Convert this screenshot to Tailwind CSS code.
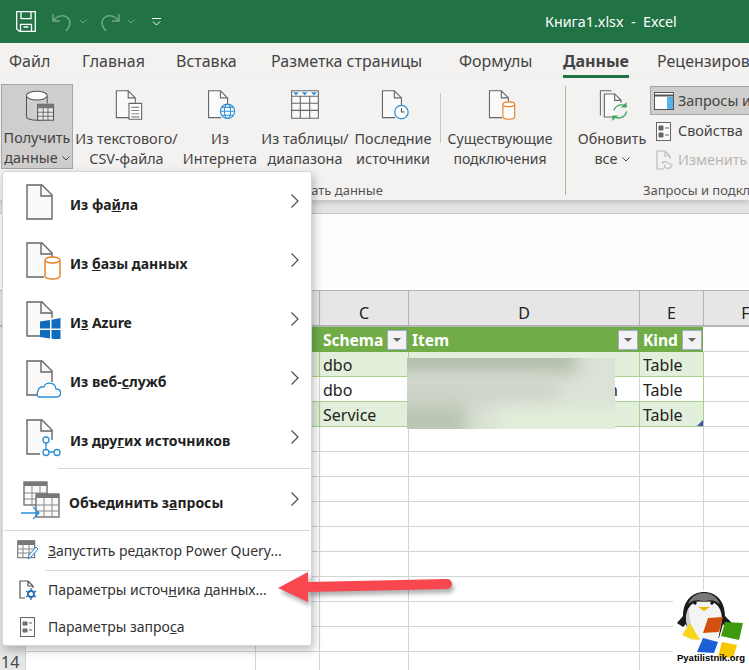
<!DOCTYPE html>
<html lang="en">
<head>
<meta charset="UTF-8">
<title>Книга1.xlsx - Excel</title>
<script src="https://cdn.jsdelivr.net/npm/@tailwindcss/browser@4"></script>
</head>
<body class="bg-white">
<div class="relative w-[749px] h-[670px] overflow-hidden bg-white font-['Noto_Sans',sans-serif] text-[14px] leading-5 text-[#444]">

  <!-- title bar -->
  <div class="flex h-[43px] items-center bg-[#217346] pl-4 text-white">
    <svg class="w-[20px] h-[21px]" viewBox="0 0 20 21" fill="none" stroke="#fff" stroke-width="1.3"><path d="M.7.7h18.6v19.6H3.5L.7 18z"/><path d="M5 .7v7h10v-7M4.500 20.300v-7h11v7M7.500 16h5"/></svg>
    <svg class="ml-[16px] w-[20px] h-[20px]" viewBox="0 0 20 20" fill="none" stroke="#6fa788" stroke-width="1.5"><path d="M1 2v7h7M1.500 8.500C6 3 12 2.500 16 6c3.500 3.500 2 9-2 13"/></svg>
    <svg class="ml-[7px] w-[8px] h-[5px]" viewBox="0 0 8 5" fill="none" stroke="#6fa788"><path d="M.5.500 4 4 7.500.5"/></svg>
    <svg class="ml-[13px] w-[20px] h-[20px]" viewBox="0 0 20 20" fill="none" stroke="#6fa788" stroke-width="1.500"><path d="M19 2v7h-7M18.500 8.500C14 3 8 2.500 4 6c-3.500 3.500-2 9 2 13"/></svg>
    <svg class="ml-[7px] w-[8px] h-[5px]" viewBox="0 0 8 5" fill="none" stroke="#6fa788"><path d="M.5.500 4 4 7.500.5"/></svg>
    <svg class="ml-[17px] w-[9px] h-[8px]" viewBox="0 0 9 8" fill="none" stroke="#fff"><path d="M0 .5h9M1 3.500 4.500 7 8 3.500"/></svg>
    <span class="ml-[384px] whitespace-pre text-[14.3px]">Книга1.xlsx  -  Excel</span>
  </div>

  <!-- tabs -->
  <div class="flex h-[36px] items-center bg-[#f3f2f1] pl-[9px] text-[16px]">
    <span class="w-[73px] shrink-0">Файл</span>
    <span class="w-[94px] shrink-0">Главная</span>
    <span class="w-[95px] shrink-0">Вставка</span>
    <span class="w-[188px] shrink-0">Разметка страницы</span>
    <span class="w-[104px] shrink-0">Формулы</span>
    <span class="relative w-[94px] shrink-0 font-bold">Данные<span class="absolute left-0 top-[24px] h-[3px] w-[66px] bg-[#217346]"></span></span>
    <span class="whitespace-nowrap">Рецензирование</span>
  </div>

  <!-- ribbon -->
  <div class="relative z-10 flex h-[121px] items-start bg-[#f3f2f1] pt-[5px] text-[14.4px] shadow-[0_3px_5px_rgba(0,0,0,0.15)]">
    <div class="ml-px flex h-[85px] w-[72px] flex-col items-center border border-[#a6a6a6] bg-[#cfcecd] pt-[5px] text-center">
      <svg class="ml-[6px] h-[39px] w-[36px]" viewBox="0 0 36 39" fill="none"><path d="M1 8v26c0 2 6 4 13 4h6" stroke="#555" stroke-width="1.300"/><path d="M27 8v9" stroke="#555" stroke-width="1.300"/><ellipse cx="14" cy="7" rx="13" ry="5.500" fill="#fff" stroke="#555" stroke-width="1.300"/><rect x="15" y="18" width="20" height="20" fill="#e8e8e8" stroke="#555" stroke-width="1.300"/><path d="M15 18h20v5H15z" fill="#777"/><path d="M15 28h20M15 33h20M22 23v15M28 23v15" stroke="#555"/></svg>
      <span class="mt-[7px]">Получить</span>
      <span class="flex items-center">данные<svg class="ml-[4px] h-[5px] w-[8px]" viewBox="0 0 8 5" fill="none" stroke="#444"><path d="M.5.500 4 4 7.500.5"/></svg></span>
    </div>

    <div class="flex h-[85px] w-[107px] flex-col items-center pt-[6px] text-center">
      <svg class="ml-[4px] h-[38px] w-[34px]" viewBox="0 0 34 38" fill="none" stroke="#666" stroke-width="1.400"><path d="M17 35H1V1h15l9 9v6" fill="#fafafa"/><path d="M16 1v9h9"/><path d="M17 17h16v20H17z" fill="#fff"/><path d="M20 22h10M20 26h10M20 30h10M20 34h10" stroke="#888"/></svg>
      <span class="mt-[9px] whitespace-nowrap">Из текстового/</span>
      <span>CSV-файла</span>
    </div>

    <div class="flex h-[85px] w-[80px] flex-col items-center pt-[6px] text-center">
      <svg class="ml-[3px] h-[38px] w-[36px]" viewBox="0 0 36 38" fill="none"><path d="M17 35H1V1h15l9 9v9" fill="#fafafa" stroke="#666" stroke-width="1.400"/><path d="M16 1v9h9" stroke="#666" stroke-width="1.400"/><circle cx="25" cy="27" r="9" fill="#fff" stroke="#2b8fd6" stroke-width="1.500"/><ellipse cx="25" cy="27" rx="4" ry="9" stroke="#2b8fd6" stroke-width="1.300"/><path d="M16 27h18M17.500 22h15M17.500 32h15" stroke="#2b8fd6" stroke-width="1.300"/></svg>
      <span class="mt-[9px]">Из</span>
      <span>Интернета</span>
    </div>

    <div class="flex h-[85px] w-[90px] flex-col items-center pt-[6px] text-center">
      <svg class="h-[37px] w-[36px]" viewBox="0 0 36 37" fill="none" stroke="#666" stroke-width="1.400"><path d="M1 1h34v35H1z" fill="#fafafa"/><path d="M1 8h34M1 17h34M1 26h34M12 8v28M24 8v28"/><path d="M3 3h7l-3.500 4zM14 3h7l-3.500 4zM26 3h7l-3.500 4z" fill="#2b8fd6" stroke="none"/></svg>
      <span class="mt-[10px] whitespace-nowrap">Из таблицы/</span>
      <span>диапазона</span>
    </div>

    <div class="flex h-[85px] w-[86px] flex-col items-center pt-[6px] text-center">
      <svg class="ml-[5px] h-[38px] w-[35px]" viewBox="0 0 35 38" fill="none"><path d="M17 35H1V1h15l9 9v9" fill="#fafafa" stroke="#666" stroke-width="1.400"/><path d="M16 1v9h9" stroke="#666" stroke-width="1.400"/><circle cx="25" cy="28" r="8.500" fill="#fff" stroke="#2b8fd6" stroke-width="1.600"/><path d="M25 23v5h4" stroke="#444" stroke-width="1.300"/></svg>
      <span class="mt-[9px] whitespace-nowrap">Последние</span>
      <span>источники</span>
    </div>

    <div class="ml-[4px] mt-[9px] h-[50px] w-px bg-[#c8c6c4]"></div>

    <div class="ml-[1px] flex h-[85px] w-[116px] flex-col items-center pt-[6px] text-center text-[14px]">
      <svg class="ml-[5px] h-[38px] w-[35px]" viewBox="0 0 35 38" fill="none"><path d="M17 35H1V1h15l9 9v5" fill="#fafafa" stroke="#666" stroke-width="1.400"/><path d="M16 1v9h9" stroke="#666" stroke-width="1.400"/><path d="M18 19v15c0 1.500 3 3 7.500 3s7.500-1.500 7.500-3V19" fill="#fff" stroke="#e87d1e" stroke-width="1.400"/><ellipse cx="25.500" cy="18" rx="7.500" ry="3" fill="#fff" stroke="#e87d1e" stroke-width="1.400"/></svg>
      <span class="mt-[9px] whitespace-nowrap">Существующие</span>
      <span>подключения</span>
    </div>

    <div class="ml-[7px] mt-[2px] h-[109px] w-px bg-[#b3b0ad]"></div>

    <div class="ml-[8px] flex h-[85px] w-[76px] flex-col items-center pt-[6px] text-center">
      <svg class="ml-[3px] h-[39px] w-[35px]" viewBox="0 0 35 39" fill="none"><path d="M1 32V1h14" stroke="#666" stroke-width="1.300"/><path d="M19 34H6V5h13l8 8v3" fill="#fafafa" stroke="#666" stroke-width="1.400"/><path d="M19 5v8h8" stroke="#666" stroke-width="1.400"/><path d="M18 26a10 10 0 0 1 16-5M34 27a10 10 0 0 1-16 6" stroke="#3aa760" stroke-width="1.600"/><path d="M34 15v7h-7M16 39v-7h7" fill="#3aa760"/></svg>
      <span class="mt-[8px]">Обновить</span>
      <span class="flex items-center">все<svg class="ml-[4px] h-[5px] w-[8px]" viewBox="0 0 8 5" fill="none" stroke="#444"><path d="M.5.500 4 4 7.500.5"/></svg></span>
    </div>

    <div class="flex w-[99px] flex-col overflow-hidden">
      <div class="mt-[2px] flex h-[29px] w-[120px] items-center whitespace-nowrap border border-[#a6a6a6] bg-[#cfcecd] pl-[3px]">
        <svg class="mr-[4px] h-[18px] w-[20px] shrink-0" viewBox="0 0 20 18" fill="none" stroke="#555"><rect x=".5" y=".5" width="19" height="17" fill="#fff"/><path d="M.5 3.500h19" stroke-width="2"/><path d="M13 5h6v12h-6z" fill="#5ab0e8" stroke="none"/></svg>
        Запросы и подключения
      </div>
      <div class="mt-[2px] flex h-[28px] items-center whitespace-nowrap pl-[6px]">
        <svg class="mr-[7px] h-[19px] w-[15px] shrink-0" viewBox="0 0 15 19" fill="none" stroke="#666"><rect x=".5" y=".5" width="14" height="18" fill="#fafafa"/><path d="M3 4h4v4H3zM3 11h4v4H3z" fill="#666"/><path d="M9 6h4M9 13h4"/></svg>
        Свойства
      </div>
      <div class="flex h-[30px] items-center whitespace-nowrap pl-[6px] text-[#b8b6b4]">
        <svg class="mr-[5px] h-[20px] w-[17px] shrink-0" viewBox="0 0 17 20" fill="none" stroke="#bbb" stroke-width="1.200"><path d="M8 19H1V1h8l5 5v3M9 1v5h5"/><path d="M6 14c0-3 5-3 6-1s4 0 4 2-3 4-6 3-2-3 0-3"/></svg>
        Изменить связи
      </div>
    </div>

    <span class="absolute left-[161px] top-[101px] whitespace-nowrap text-[13px] text-[#555]">Получить и преобразовать данные</span>
    <span class="absolute left-[643px] top-[101px] w-[106px] overflow-hidden whitespace-nowrap text-[13px] text-[#555]">Запросы и подключения</span>
  </div>

  <!-- formula bar -->
  <div class="h-[14px] border-b border-[#c4c4c4] bg-[#e4e4e4]"></div>
  <div class="h-[76px] bg-[#fdfdfd]"></div>

  <!-- worksheet -->
  <div class="grid grid-cols-[25px_230px_64px_89px_231px_64px_84px] grid-rows-[37px_repeat(14,25px)] text-[16px] text-[#222]">
    <div class="col-span-2 border-t border-b-2 border-[#b5b5b5] bg-[#e6e6e6]"></div>
    <div class="border-t border-b-2 border-l border-[#b5b5b5] bg-[#e6e6e6]"></div>
    <div class="flex items-end justify-center border-t border-b-2 border-l border-[#b5b5b5] bg-[#e6e6e6] leading-[23px]">C</div>
    <div class="flex items-end justify-center border-t border-b-2 border-l border-[#b5b5b5] bg-[#e6e6e6] leading-[23px]">D</div>
    <div class="flex items-end justify-center border-t border-b-2 border-l border-[#b5b5b5] bg-[#e6e6e6] leading-[23px]">E</div>
    <div class="flex items-end justify-center border-t border-b-2 border-l border-[#b5b5b5] bg-[#e6e6e6] leading-[23px]">F</div>

    <!-- table header -->
    <div class="bg-[#e6e6e6]"></div><div class="border-b border-[#d4d4d4]"></div><div class="bg-[#70ad47]"></div>
    <div class="flex items-center justify-between bg-[#70ad47] pl-[4px] pr-[1px] text-[15.5px] font-bold text-white">Schema<span class="flex h-[20px] w-[20px] items-center justify-center border border-[#a5a8c8] bg-[#f2f2f2]"><span class="border-x-[4px] border-t-[4px] border-x-transparent border-t-[#666]"></span></span></div>
    <div class="flex items-center justify-between bg-[#70ad47] pl-[4px] pr-[1px] text-[15.5px] font-bold text-white">Item<span class="flex h-[20px] w-[20px] items-center justify-center border border-[#a5a8c8] bg-[#f2f2f2]"><span class="border-x-[4px] border-t-[4px] border-x-transparent border-t-[#666]"></span></span></div>
    <div class="flex items-center justify-between bg-[#70ad47] pl-[4px] pr-[1px] text-[15.5px] font-bold text-white">Kind<span class="flex h-[20px] w-[20px] items-center justify-center border border-[#a5a8c8] bg-[#f2f2f2]"><span class="border-x-[4px] border-t-[4px] border-x-transparent border-t-[#666]"></span></span></div>
    <div class="border-b border-[#d4d4d4]"></div>

    <!-- table rows -->
    <div class="bg-[#e6e6e6]"></div><div class="border-b border-[#d4d4d4]"></div><div class="border-b border-[#a9d08e] bg-[#e2efda]"></div>
    <div class="border-b border-l border-[#a9d08e] bg-[#e2efda] pl-[3px] leading-[26px]">dbo</div>
    <div class="border-b border-l border-[#a9d08e] bg-[#e2efda]"></div>
    <div class="border-b border-l border-[#a9d08e] bg-[#e2efda] pl-[3px] leading-[26px]">Table</div>
    <div class="border-b border-l border-[#d4d4d4] border-l-[#a9d08e]"></div>

    <div class="bg-[#e6e6e6]"></div><div class="border-b border-[#d4d4d4]"></div><div class="border-b border-[#a9d08e]"></div>
    <div class="border-b border-l border-[#a9d08e] border-l-[#d4d4d4] pl-[3px] leading-[26px]">dbo</div>
    <div class="border-b border-l border-[#a9d08e] border-l-[#d4d4d4] pl-[199px] leading-[26px]">n</div>
    <div class="border-b border-l border-[#a9d08e] border-l-[#d4d4d4] pl-[3px] leading-[26px]">Table</div>
    <div class="border-b border-l border-[#d4d4d4] border-l-[#a9d08e]"></div>

    <div class="bg-[#e6e6e6]"></div><div class="border-b border-[#d4d4d4]"></div><div class="border-b border-[#a9d08e] bg-[#e2efda]"></div>
    <div class="border-b border-l border-[#a9d08e] bg-[#e2efda] pl-[3px] leading-[26px]">Service</div>
    <div class="border-b border-l border-[#a9d08e] bg-[#e2efda]"></div>
    <div class="relative border-b border-l border-[#a9d08e] bg-[#e2efda] pl-[3px] leading-[26px]">Table<span class="absolute bottom-0 right-0 h-[6px] w-[6px] bg-[#3f51b5] [clip-path:polygon(100%_0,100%_100%,0_100%)]"></span></div>
    <div class="border-b border-l border-[#d4d4d4] border-l-[#a9d08e]"></div>

    <!-- empty rows -->
    <div class="bg-[#e6e6e6]"></div><div class="border-b border-l border-[#d4d4d4]"></div><div class="border-b border-l border-[#d4d4d4]"></div><div class="border-b border-l border-[#d4d4d4]"></div><div class="border-b border-l border-[#d4d4d4]"></div><div class="border-b border-l border-[#d4d4d4]"></div><div class="border-b border-l border-[#d4d4d4]"></div>
    <div class="bg-[#e6e6e6]"></div><div class="border-b border-l border-[#d4d4d4]"></div><div class="border-b border-l border-[#d4d4d4]"></div><div class="border-b border-l border-[#d4d4d4]"></div><div class="border-b border-l border-[#d4d4d4]"></div><div class="border-b border-l border-[#d4d4d4]"></div><div class="border-b border-l border-[#d4d4d4]"></div>
    <div class="bg-[#e6e6e6]"></div><div class="border-b border-l border-[#d4d4d4]"></div><div class="border-b border-l border-[#d4d4d4]"></div><div class="border-b border-l border-[#d4d4d4]"></div><div class="border-b border-l border-[#d4d4d4]"></div><div class="border-b border-l border-[#d4d4d4]"></div><div class="border-b border-l border-[#d4d4d4]"></div>
    <div class="bg-[#e6e6e6]"></div><div class="border-b border-l border-[#d4d4d4]"></div><div class="border-b border-l border-[#d4d4d4]"></div><div class="border-b border-l border-[#d4d4d4]"></div><div class="border-b border-l border-[#d4d4d4]"></div><div class="border-b border-l border-[#d4d4d4]"></div><div class="border-b border-l border-[#d4d4d4]"></div>
    <div class="bg-[#e6e6e6]"></div><div class="border-b border-l border-[#d4d4d4]"></div><div class="border-b border-l border-[#d4d4d4]"></div><div class="border-b border-l border-[#d4d4d4]"></div><div class="border-b border-l border-[#d4d4d4]"></div><div class="border-b border-l border-[#d4d4d4]"></div><div class="border-b border-l border-[#d4d4d4]"></div>
    <div class="bg-[#e6e6e6]"></div><div class="border-b border-l border-[#d4d4d4]"></div><div class="border-b border-l border-[#d4d4d4]"></div><div class="border-b border-l border-[#d4d4d4]"></div><div class="border-b border-l border-[#d4d4d4]"></div><div class="border-b border-l border-[#d4d4d4]"></div><div class="border-b border-l border-[#d4d4d4]"></div>
    <div class="bg-[#e6e6e6]"></div><div class="border-b border-l border-[#d4d4d4]"></div><div class="border-b border-l border-[#d4d4d4]"></div><div class="border-b border-l border-[#d4d4d4]"></div><div class="border-b border-l border-[#d4d4d4]"></div><div class="border-b border-l border-[#d4d4d4]"></div><div class="border-b border-l border-[#d4d4d4]"></div>
    <div class="bg-[#e6e6e6]"></div><div class="border-b border-l border-[#d4d4d4]"></div><div class="border-b border-l border-[#d4d4d4]"></div><div class="border-b border-l border-[#d4d4d4]"></div><div class="border-b border-l border-[#d4d4d4]"></div><div class="border-b border-l border-[#d4d4d4]"></div><div class="border-b border-l border-[#d4d4d4]"></div>
    <div class="bg-[#e6e6e6]"></div><div class="border-b border-l border-[#d4d4d4]"></div><div class="border-b border-l border-[#d4d4d4]"></div><div class="border-b border-l border-[#d4d4d4]"></div><div class="border-b border-l border-[#d4d4d4]"></div><div class="border-b border-l border-[#d4d4d4]"></div><div class="border-b border-l border-[#d4d4d4]"></div>
    <div class="bg-[#e6e6e6] pl-[1px] text-[#444]">14</div><div class="border-b border-l border-[#d4d4d4]"></div><div class="border-b border-l border-[#d4d4d4]"></div><div class="border-b border-l border-[#d4d4d4]"></div><div class="border-b border-l border-[#d4d4d4]"></div><div class="border-b border-l border-[#d4d4d4]"></div><div class="border-b border-l border-[#d4d4d4]"></div>
  </div>

  <!-- blurred cells -->
  <div class="absolute left-[407px] top-[358px] h-[71px] w-[208px] overflow-hidden bg-[#dbe3d6]">
    <div class="absolute left-[-20px] top-[-8px] h-[22px] w-[190px] bg-[#adb8a6] blur-[9px]"></div>
    <div class="absolute left-[-20px] top-[22px] h-[24px] w-[170px] bg-[#cdd2c9] blur-[9px]"></div>
    <div class="absolute left-[-20px] top-[46px] h-[35px] w-[80px] bg-[#b8c4b1] blur-[9px]"></div>
    <div class="absolute left-[90px] top-[50px] h-[30px] w-[130px] bg-[#e2efda] blur-[9px]"></div>
  </div>

  <!-- data menu -->
  <div class="absolute left-[2px] top-[171px] z-20 flex h-[475px] w-[310px] flex-col rounded-[3px] border border-[#d6d6d6] bg-white text-[#222] shadow-[2px_4px_10px_rgba(0,0,0,0.25)]">
    <div class="flex h-[59px] items-center pl-[23px] pr-[12px]">
      <svg class="h-[36px] w-[28px]" viewBox="0 0 28 36" fill="none" stroke="#666" stroke-width="1.400"><path d="M1 35V1h15l10 10v24z" fill="#fafafa"/><path d="M15 1v11h11"/></svg>
      <span class="ml-[16px] pt-[6px] font-bold">Из фа<u>й</u>ла</span>
      <svg class="mb-[2px] ml-auto h-[14px] w-[8px]" viewBox="0 0 8 14" fill="none" stroke="#444" stroke-width="1.100"><path d="M.5.500 7 7 .5 13.500"/></svg>
    </div>
    <div class="flex h-[59px] items-center pl-[23px] pr-[12px]">
      <svg class="h-[38px] w-[35px]" viewBox="0 0 35 38" fill="none"><path d="M18 35H1V1h15l10 10v5" fill="#fafafa" stroke="#666" stroke-width="1.400"/><path d="M15 1v11h11" stroke="#666" stroke-width="1.400"/><path d="M19 19v15c0 1.500 3 3 7.500 3s7.500-1.500 7.500-3V19" fill="#fff" stroke="#e87d1e" stroke-width="1.400"/><ellipse cx="26.500" cy="18" rx="7.500" ry="3" fill="#fff" stroke="#e87d1e" stroke-width="1.400"/></svg>
      <span class="ml-[9px] pt-[6px] font-bold">Из <u>б</u>азы данных</span>
      <svg class="mb-[2px] ml-auto h-[14px] w-[8px]" viewBox="0 0 8 14" fill="none" stroke="#444" stroke-width="1.100"><path d="M.5.500 7 7 .5 13.500"/></svg>
    </div>
    <div class="flex h-[59px] items-center pl-[23px] pr-[12px]">
      <svg class="h-[38px] w-[35px]" viewBox="0 0 35 38" fill="none"><path d="M14 35H1V1h15l10 10v6" fill="#fafafa" stroke="#666" stroke-width="1.400"/><path d="M15 1v11h11" stroke="#666" stroke-width="1.400"/><path d="M14 20.500 24 19v8.500H14zM25.500 18.800 34.500 17v10.500h-9zM14 29h10v8.500l-10-1.500zM25.500 29h9v10.500l-9-2z" fill="#0f6cbd"/></svg>
      <span class="ml-[9px] pt-[6px] font-bold">И<u>з</u> Azure</span>
      <svg class="mb-[2px] ml-auto h-[14px] w-[8px]" viewBox="0 0 8 14" fill="none" stroke="#444" stroke-width="1.100"><path d="M.5.500 7 7 .5 13.500"/></svg>
    </div>
    <div class="flex h-[59px] items-center pl-[23px] pr-[12px]">
      <svg class="h-[38px] w-[35px]" viewBox="0 0 35 38" fill="none"><path d="M12 35H1V1h15l10 10v11" fill="#fafafa" stroke="#666" stroke-width="1.400"/><path d="M15 1v11h11" stroke="#666" stroke-width="1.400"/><path d="M13 37h17c6 0 6-8 0-8-1-8-11-7-12-2-6-2-9 10-5 10z" fill="#fff" stroke="#2b8fd6" stroke-width="1.300"/></svg>
      <span class="ml-[9px] pt-[6px] font-bold">Из веб-<u>с</u>лужб</span>
      <svg class="mb-[2px] ml-auto h-[14px] w-[8px]" viewBox="0 0 8 14" fill="none" stroke="#444" stroke-width="1.100"><path d="M.5.500 7 7 .5 13.500"/></svg>
    </div>
    <div class="flex h-[60px] items-center pl-[23px] pr-[12px]">
      <svg class="h-[38px] w-[35px]" viewBox="0 0 35 38" fill="none"><path d="M14 35H1V1h15l10 10v10" fill="#fafafa" stroke="#666" stroke-width="1.400"/><path d="M15 1v11h11" stroke="#666" stroke-width="1.400"/><path d="M20 24v7M22 33h6" stroke="#2b8fd6" stroke-width="1.300"/><circle cx="20" cy="21" r="3" fill="#fff" stroke="#2b8fd6" stroke-width="1.300"/><circle cx="20" cy="33.500" r="3" fill="#fff" stroke="#2b8fd6" stroke-width="1.300"/><circle cx="31" cy="33.500" r="3" fill="#fff" stroke="#2b8fd6" stroke-width="1.300"/></svg>
      <span class="ml-[9px] pt-[6px] font-bold">Из дру<u>г</u>их источников</span>
      <svg class="mb-[2px] ml-auto h-[14px] w-[8px]" viewBox="0 0 8 14" fill="none" stroke="#444" stroke-width="1.100"><path d="M.5.500 7 7 .5 13.500"/></svg>
    </div>
    <div class="ml-[55px] mr-px h-px bg-[#d8d8d8]"></div>
    <div class="flex h-[61px] items-center pl-[17px] pr-[12px]">
      <svg class="h-[38px] w-[41px]" viewBox="0 0 41 38" fill="none"><rect x="4" y="1" width="23" height="23" fill="#fafafa" stroke="#666" stroke-width="1.300"/><path d="M4 1h23v4H4z" fill="#777"/><path d="M4 12h23M4 18h23M12 5v19M20 5v19" stroke="#888"/><rect x="16" y="13" width="23" height="23" fill="#fafafa" stroke="#666" stroke-width="1.300"/><path d="M16 13h23v4H16z" fill="#777"/><path d="M16 24h23M16 30h23M24 17v19M32 17v19" stroke="#888"/><path d="M1 32h18M13 26l6 6-6 6" stroke="#2b8fd6" stroke-width="1.300"/></svg>
      <span class="ml-[8px] pt-[6px] font-bold">Объединить з<u>а</u>просы</span>
      <svg class="mb-[2px] ml-auto h-[14px] w-[8px]" viewBox="0 0 8 14" fill="none" stroke="#444" stroke-width="1.100"><path d="M.5.500 7 7 .5 13.500"/></svg>
    </div>
    <div class="mx-px h-px bg-[#d8d8d8]"></div>
    <div class="flex h-[39px] items-center pl-[14px] text-[#333]">
      <svg class="h-[21px] w-[21px]" viewBox="0 0 21 21" fill="none"><rect x=".7" y=".7" width="17" height="17" fill="#fafafa" stroke="#666"/><path d="M1 1h17v4H1z" fill="#777"/><path d="M1 9h17M1 13h17M6 5v13M12 5v13" stroke="#888"/><path d="M11 19l1-4 7-8 2 2-7 8z" fill="#fff" stroke="#2b7cd3"/></svg>
      <span class="ml-[10px] whitespace-nowrap"><u>З</u>апустить редактор Power Query...</span>
    </div>
    <div class="ml-[42px] mr-px h-px bg-[#d8d8d8]"></div>
    <div class="flex h-[37px] items-center pl-[16px] text-[#333]">
      <svg class="h-[20px] w-[19px]" viewBox="0 0 19 20" fill="none"><path d="M6 18H1V1h8l5 5v2M9 1v5h5" stroke="#555" stroke-width="1.200"/><circle cx="12" cy="14" r="3" stroke="#2b6cb0" stroke-width="1.800"/><path d="M12 8v3M12 17v3M7 11l2 1.500M15 15.500l2 1.500M7 17l2-1.500M15 12.500l2-1.500" stroke="#2b6cb0" stroke-width="1.300"/></svg>
      <span class="ml-[10px] whitespace-nowrap">Параметры источ<u>н</u>ика данных...</span>
    </div>
    <div class="flex h-[37px] items-center pl-[17px] text-[#333]">
      <svg class="h-[20px] w-[15px]" viewBox="0 0 15 20" fill="none" stroke="#666"><rect x=".5" y=".5" width="14" height="19" fill="#fafafa"/><path d="M3 5h4v3H3zM3 12h4v3H3z" fill="#777"/><path d="M9 6h3M9 13h3"/></svg>
      <span class="ml-[13px] whitespace-nowrap">Параметры запро<u>с</u>а</span>
    </div>
  </div>

  <!-- watermark -->
  <div class="absolute left-[673px] top-[590px] z-30 flex h-[80px] w-[76px] flex-col bg-white">
    <svg class="h-[62px] w-[76px] overflow-visible" viewBox="0 0 76 62">
      <path d="M10 26C10 10 20 2 31 2s21 8 21 24l7 7-6 4-3-3-4 14H17l-4-14-3 3-6-4z" fill="#1a1a1a"/>
      <path d="M31 3c-8 0-13 4-16 11 5-4 11-5 16-2 5-3 11-2 16 2-3-7-8-11-16-11z" fill="#777"/>
      <path d="M13 30c0-12 6-21 18-18 12-3 18 6 18 18l-4 20H17z" fill="#f4f4f4"/>
      <path d="M13 30c0-5 1-9 3-12 0 10 2 20 6 30h-5z" fill="#cfcfcf"/>
      <circle cx="22" cy="13" r="1.700" fill="#111"/><circle cx="39" cy="13" r="1.700" fill="#111"/>
      <path d="M25 17h12l-6 4z" fill="#f5b400"/>
      <path d="M9 45 17 33l10 17-9-1z" fill="#f7d51d"/>
      <path d="M30 43l5-15 15-1-4 15z" fill="#d4500f"/>
      <path d="M52 32l18 1-4 17-18-4z" fill="#3f9a10"/>
      <path d="M30 48l15 4-4 11-17-1z" fill="#1c5ed6"/>
      <path d="M49 52l15 3-4 13-15-1z" fill="#f7c800"/>
    </svg>
    <span class="ml-[4px] whitespace-nowrap font-['Liberation_Sans',sans-serif] text-[9.5px] font-bold leading-[12px] text-black">Pyatilistnik.org</span>
  </div>

  <!-- red arrow -->
  <svg class="absolute left-[270px] top-[560px] z-30 h-[60px] w-[190px] overflow-visible" viewBox="0 0 190 60">
    <path d="M8 28 38 12l0 10 139-3a5 5 0 0 1 0 10L38 32l0 10z" fill="#000" opacity=".3" transform="translate(2 4)" style="filter:blur(2px)"/>
    <path d="M8 28 38 12l0 10 139-3a5 5 0 0 1 0 10L38 32l0 10z" fill="#f9474f"/>
  </svg>
</div>
</body>
</html>
